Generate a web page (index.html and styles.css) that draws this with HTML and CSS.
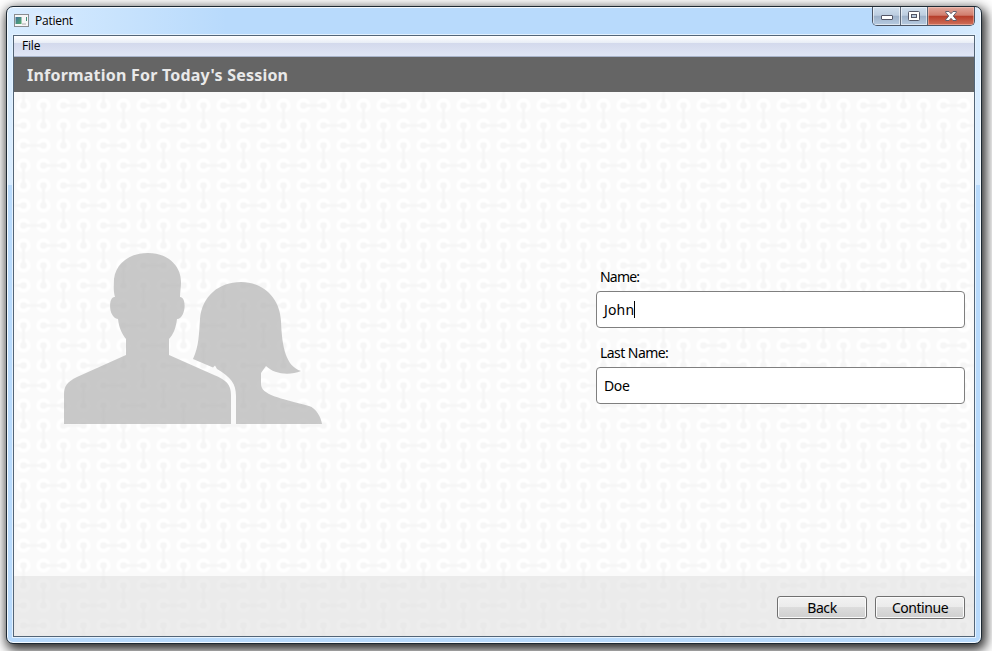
FILE: index.html
```html
<!DOCTYPE html>
<html lang="en">
<head>
<meta charset="utf-8">
<title>Patient</title>
<link rel="stylesheet" href="styles.css">
</head>
<body>
<div class="window">
  <header class="titlebar">
    <svg class="app-icon" width="16" height="14" viewBox="0 0 16 14">
      <defs><linearGradient id="scr" x2="1" y2="1"><stop stop-color="#3f6f9c"/><stop offset="1" stop-color="#56b06c"/></linearGradient></defs>
      <rect x=".5" y=".5" width="14" height="12" fill="#f6f6f6" stroke="#8a8d90"/>
      <rect x="1.500" y="3" width="6" height="7" fill="url(#scr)"/>
      <rect x="12" y="3" width="1" height="4" fill="#3d8f78"/>
      <rect x="8" y="9" width="4" height="2" fill="#d2d2d2"/>
    </svg>
    <span class="caption">Patient</span>
    <div class="controls">
      <span class="ctl min"><svg width="12" height="6" viewBox="0 0 12 6"><rect x=".5" y=".5" width="11" height="4" rx=".5" fill="#fff" stroke="#535666"/></svg></span>
      <span class="ctl max"><svg width="12" height="10" viewBox="0 0 12 10"><rect x=".5" y=".5" width="11" height="9" rx="1" fill="#fff" stroke="#535666"/><rect x="3.500" y="3.500" width="5" height="3" fill="#b8cbe0" stroke="#535666"/></svg></span>
      <span class="ctl close"><svg width="12" height="10" viewBox="0 0 12 10"><path d="M.7.5H4L6 2.700 8 .5h3.300v.8L8.300 5l3 3.700v.8H8L6 7.300 4 9.500H.7v-.8l3-3.700-3-3.700z" fill="#fff" stroke="#535666" stroke-width=".9"/></svg></span>
    </div>
  </header>
  <main class="client">
    <nav class="menubar"><span>File</span></nav>
    <h1 class="heading">Information For Today's Session</h1>
    <div class="page">
      <svg class="pattern" width="960" height="544">
        <defs>
          <pattern id="links" width="80" height="80" x="-.5" y="3.500" patternUnits="userSpaceOnUse">
            <g fill="none" stroke="#fff" stroke-width="4">
              <g id="row"><circle cx="10" cy="10" r="5.200"/><circle cx="30" cy="10" r="5.200"/><circle cx="50" cy="10" r="5.200"/><circle cx="70" cy="10" r="5.200"/></g>
              <use href="#row" y="20"/><use href="#row" y="40"/><use href="#row" y="60"/>
            </g>
            <g stroke="#f6f6f6" stroke-width="3" fill="none">
              <path d="M10 0V10M10 70V80M30 10V30M50 30V50M70 50V70M50 10H70M0 30H10M70 30H80M10 50H30M30 70H50"/>
            </g>
            <g fill="#f6f6f6">
              <g id="dots"><circle cx="10" cy="10" r="3.300"/><circle cx="30" cy="10" r="3.300"/><circle cx="50" cy="10" r="3.300"/><circle cx="70" cy="10" r="3.300"/></g>
              <use href="#dots" y="20"/><use href="#dots" y="40"/><use href="#dots" y="60"/>
            </g>
          </pattern>
        </defs>
        <rect width="960" height="544" fill="#fafafa"/>
        <rect width="960" height="544" fill="url(#links)"/>
      </svg>
      <div class="content">
        <svg class="people" width="260" height="173" viewBox="0 0 260 173">
          <g fill="#b2b2b2" fill-opacity=".7">
            <path d="M84 1C103 1 117 13 117 30C117 35 116 40 116 45C123 45 122 66 113 67C112 76 109 83 105 87V103L150 123C162 128 167 132 167 143V172H0V143C0 134 3 130 13 125L62 103V87C58 82 55 76 54 67C44 66 44 44 51 45C49 38 50 32 50 27C52 11 66 1 84 1Z"/>
            <path d="M177 30C199 30 216 46 217 69C218 96 222 114 237 119C225 124 210 122 202 114L197 121V132C197 143 216 146 245 154C252 156 257 165 258 172H172V144C172 132 167 125 153 117L151 113.500L149 115.500L129 107C135 94 135 82 136 67C138 44 155 30 177 30Z"/>
          </g>
        </svg>
        <form class="fields">
          <label>Name:</label>
          <div class="input first"><span class="text">John</span><i class="caret"></i></div>
          <label class="second">Last Name:</label>
          <div class="input"><span class="text">Doe</span></div>
        </form>
      </div>
      <footer class="footer">
        <button>Back</button>
        <button>Continue</button>
      </footer>
    </div>
  </main>
</div>
</body>
</html>
```
FILE: styles.css
```css
* { box-sizing: border-box; }
body {
  margin: 0;
  width: 992px;
  height: 651px;
  overflow: hidden;
  padding: 6px 10px 7px 6px;
  background: #fff;
  font-family: "Noto Sans", sans-serif;
  color: #000;
}
.window {
  width: 976px;
  height: 638px;
  border: 1px solid #1d2933;
  border-radius: 7px;
  padding: 0 6px 6px;
  background:
    linear-gradient(90deg, rgba(220,238,255,.9), rgba(220,238,255,0) 220px) 0 0 / 100% 178px no-repeat,
    linear-gradient(270deg, rgba(220,238,255,.9), rgba(220,238,255,0) 110px) 0 0 / 100% 178px no-repeat,
    #b8dafc;
  box-shadow: inset 0 0 0 1px #f4faff, 2px 4px 12px 2px rgba(0,0,0,.85);
}
.titlebar {
  display: flex;
  height: 28px;
  padding-left: 1px;
  align-items: flex-start;
}
.app-icon { margin-top: 7px; }
.caption {
  font: 12px/16px "Open Sans", sans-serif;
  letter-spacing: -.25px;
  margin: 6px 0 0 5px;
  text-shadow: 0 0 8px #fff, 0 0 8px #fff;
}
.controls {
  display: flex;
  margin-left: auto;
  width: 103px;
  height: 19px;
  border: 1px solid #4c5565;
  border-top: 0;
  border-radius: 0 0 5px 5px;
  overflow: hidden;
}
.ctl {
  display: flex;
  align-items: center;
  justify-content: center;
  box-shadow: inset 0 0 0 1px rgba(255,255,255,.55);
  background: linear-gradient(#d0dfee 0, #bccde0 47%, #9cb0c8 48%, #b7cbe1);
}
.min { width: 28px; border-right: 1px solid #5b6677; padding-top: 4px; }
.max { width: 27px; border-right: 1px solid #5b6677; }
.close {
  flex: 1;
  box-shadow: inset 0 0 0 1px rgba(255,215,205,.45);
  background: linear-gradient(#e2a89c 0, #d07c6c 47%, #b43a27 48%, #d0705a);
}
.client {
  height: 602px;
  border: 1px solid #536577;
  box-shadow: 0 0 0 1px #e4f2ff;
}
.menubar {
  height: 21px;
  padding-left: 8px;
  font: 12px/20px "Open Sans", sans-serif;
  letter-spacing: -.2px;
  border-bottom: 1px solid #a9b5cb;
  background: linear-gradient(#fff 0, #e8edf6 7px, #d3d9ec 7px, #e0e6f5 100%);
}
.heading {
  margin: 0;
  height: 35px;
  padding-left: 13px;
  font: bold 16px/36px "Noto Sans", sans-serif;
  letter-spacing: .21px;
  color: #e9e9e9;
  background: #656565;
}
.page {
  display: flex;
  flex-direction: column;
  height: 544px;
  position: relative;
}
.pattern { position: absolute; inset: 0; }
.content, .footer { position: relative; }
.content {
  display: flex;
  justify-content: space-between;
  height: 484px;
  padding: 160px 9px 0 50px;
}
.fields { width: 369px; padding-top: 15px; }
.fields label {
  display: block;
  height: 24px;
  padding-left: 4px;
  font-size: 14px;
  line-height: 20px;
  letter-spacing: -.8px;
}
.fields .second { margin-top: 15px; letter-spacing: -.55px; }
.input {
  display: flex;
  align-items: center;
  height: 37px;
  padding-left: 7px;
  border: 1px solid #7f7f7f;
  border-radius: 4px;
  background: #fff;
  font-size: 14px;
  letter-spacing: -.4px;
}
.first { letter-spacing: .15px; }
.caret { width: 1px; height: 17px; background: #000; }
.footer {
  display: flex;
  justify-content: flex-end;
  gap: 8px;
  height: 60px;
  padding: 20px 9px 0 0;
  background: rgba(222,222,222,.55);
}
.footer button {
  width: 90px;
  height: 23px;
  padding: 0;
  border: 1px solid #707070;
  border-radius: 3px;
  box-shadow: inset 0 0 0 1px #fbfbfb;
  background: linear-gradient(#f2f2f2 0, #ebebeb 48%, #dcdcdc 49%, #cfcfcf);
  font: 14px/20px "Noto Sans", sans-serif;
  letter-spacing: -.45px;
  color: #000;
}
```
